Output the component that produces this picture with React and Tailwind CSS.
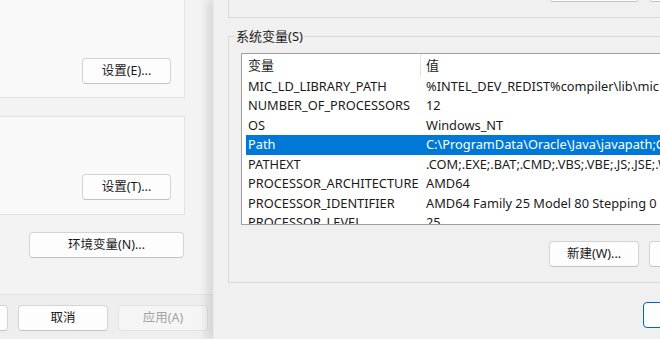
import React from "react";

function Btn({ children, className = "", disabled = false, primary = false }) {
  return (
    <div
      className={
        "shrink-0 h-[26px] flex items-center justify-center rounded-[4px] border text-[12.5px] " +
        (disabled
          ? "bg-[#f5f5f5] border-[#e3e3e3] text-[#a3a3a3] "
          : primary
          ? "bg-[#fdfdfd] border-[#0067c0] text-[#1a1a1a] "
          : "bg-[#fdfdfd] border-[#d4d4d4] border-b-[#c2c2c2] text-[#1a1a1a] ") +
        className
      }
    >
      {children}
    </div>
  );
}

const rows = [
  ["MIC_LD_LIBRARY_PATH", "%INTEL_DEV_REDIST%compiler\\lib\\mic"],
  ["NUMBER_OF_PROCESSORS", "12"],
  ["OS", "Windows_NT"],
  ["Path", "C:\\ProgramData\\Oracle\\Java\\javapath;C:\\Windows"],
  ["PATHEXT", ".COM;.EXE;.BAT;.CMD;.VBS;.VBE;.JS;.JSE;.WSF"],
  ["PROCESSOR_ARCHITECTURE", "AMD64"],
  ["PROCESSOR_IDENTIFIER", "AMD64 Family 25 Model 80 Stepping 0"],
  ["PROCESSOR_LEVEL", "25"],
];

function LeftDialog() {
  return (
    <div className="w-[213px] shrink-0 h-full overflow-hidden flex flex-col bg-[#f3f3f3]">
      <div className="ml-[-10px] mr-[28px] h-[98px] border border-t-0 border-[#e2e2e2] bg-[#f9f9f9] flex items-end justify-end pb-[13px] pr-[13px]">
        <Btn className="w-[89px]">设置(E)...</Btn>
      </div>
      <div className="ml-[-10px] mr-[28px] mt-[18px] h-[99px] border border-[#e2e2e2] bg-[#f9f9f9] flex items-end justify-end pb-[14px] pr-[13px]">
        <Btn className="w-[89px]">设置(T)...</Btn>
      </div>
      <div className="mt-[17px] self-end mr-[29px]">
        <Btn className="w-[155px]">环境变量(N)...</Btn>
      </div>
      <div className="mt-auto h-[45px] bg-[#eeeeee] border-t border-[#e4e4e4] flex gap-[10px] ml-[-82px] pt-[10px]">
        <Btn className="w-[90px]">确定</Btn>
        <Btn className="w-[90px]">取消</Btn>
        <Btn className="w-[90px]" disabled>
          应用(A)
        </Btn>
      </div>
    </div>
  );
}

function RightDialog() {
  return (
    <div className="flex-1 h-full relative z-10 bg-[#f0f0f0] overflow-hidden pl-[14px] shadow-[-7px_0_8px_rgba(0,0,0,0.10)] border-l border-[#e9e9e9]">
      <div className="w-[480px] flex flex-col">
        <div className="h-[18px] shrink-0 flex items-start border-l border-b border-[#d9d9d9]">
          <div className="flex gap-[10px] pl-[320px] mt-[-24px]">
            <Btn className="w-[90px]">编辑(I)...</Btn>
            <Btn className="w-[90px]">删除(D)</Btn>
          </div>
        </div>
        <div className="relative shrink-0 mt-[18px] h-[247px] border border-[#d9d9d9] pl-[12px] pt-[16px]">
          <span className="absolute left-[6px] top-[-10px] px-[1px] bg-[#f0f0f0] leading-[18px] text-[13px] text-[#1a1a1a]">
            系统变量(S)
          </span>
          <div className="h-[172px] w-[460px] border border-[#a0a0a0] bg-white overflow-hidden text-[12.8px] text-[#1a1a1a]">
            <div className="h-[22.5px] flex items-center pl-[4px] text-[13px]">
              <div className="w-[175px] h-full border-r border-[#e5e5e5] pl-[2px] flex items-center">变量</div>
              <div className="ml-[3px] pl-[2px]">值</div>
            </div>
            {rows.map(([k, v]) => {
              const sel = k === "Path";
              return (
                <div
                  key={k}
                  className={
                    "h-[19.5px] ml-[4px] flex items-center whitespace-nowrap " +
                    (sel ? "bg-[#0078d7] text-white" : "")
                  }
                >
                  <div className="w-[178px] shrink-0 pl-[2px]">{k}</div>
                  <div className="pl-[2px]">{v}</div>
                </div>
              );
            })}
          </div>
          <div className="flex gap-[10px] mt-[16px] pl-[308px]">
            <Btn className="w-[90px]">新建(W)...</Btn>
            <Btn className="w-[90px]">编辑(I)...</Btn>
          </div>
        </div>
        <div className="mt-[19px] pl-[415px] flex gap-[10px]">
          <Btn className="w-[90px]" primary>
            确定
          </Btn>
        </div>
      </div>
    </div>
  );
}

export default function App() {
  return (
    <div className="w-[660px] h-[339px] overflow-hidden flex bg-[#f3f3f3] font-['Noto_Sans','Noto_Sans_CJK_SC',sans-serif] text-[13px] text-black">
      <LeftDialog />
      <RightDialog />
    </div>
  );
}
